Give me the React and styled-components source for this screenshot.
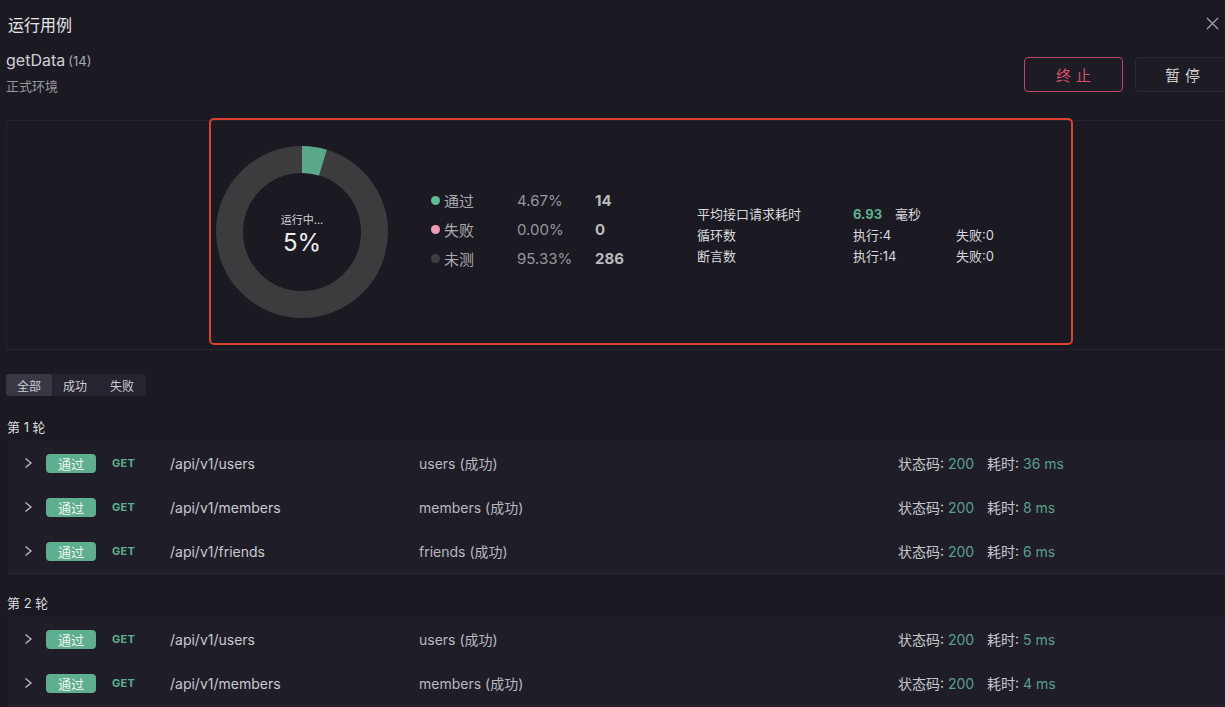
import React from "react";
import styled, { createGlobalStyle } from "styled-components";

const GlobalStyle = createGlobalStyle`
  html, body { margin: 0; padding: 0; background: #1b1a22; }
  body {
    font-family: Inter, "Noto Sans CJK SC", "Noto Sans", sans-serif;
    color: #d6d6da;
  }
  * { box-sizing: border-box; }
`;

const Modal = styled.div`
  width: 1225px;
  height: 707px;
  display: flex;
  flex-direction: column;
  overflow: hidden;
  background: #1b1a22;
`;

const Header = styled.div`
  height: 53px;
  flex: none;
  display: flex;
  align-items: center;
  justify-content: space-between;
  padding: 0 8px 6px 8px;
  background: #1b1a22;
`;

const HeaderTitle = styled.div`
  font-size: 16px;
  color: #e4e4e8;
  font-weight: 400;
`;

const Close = styled.button`
  width: 16px;
  height: 16px;
  padding: 0;
  background: none;
  border: none;
  display: flex;
  align-items: center;
  justify-content: center;
  margin-right: -3px;
`;

const Body = styled.div`
  flex: 1;
  overflow: hidden;
  padding-left: 6px;
`;

const TopRow = styled.div`
  display: flex;
  justify-content: space-between;
  align-items: flex-start;
  margin-top: -3px;
`;

const TitleBlock = styled.div`
  display: flex;
  flex-direction: column;
`;

const Title = styled.div`
  font-size: 16px;
  line-height: 20px;
  color: #d0d0d4;
  span {
    font-size: 13px;
    color: #a8a8ae;
    margin-left: 3px;
  }
`;

const SubTitle = styled.div`
  margin-top: 5px;
  font-size: 13px;
  line-height: 20px;
  color: #97979d;
`;

const Buttons = styled.div`
  display: flex;
  gap: 12px;
  margin-top: 7px;
  margin-right: -10px;
`;

const Btn = styled.button`
  height: 35px;
  width: ${(p) => (p.$danger ? "99px" : "100px")};
  border-radius: 4px;
  background: ${(p) => (p.$danger ? "#1d1b24" : "#1d1c24")};
  border: 1px solid ${(p) => (p.$danger ? "#b44a6a" : "#2a2931")};
  color: ${(p) => (p.$danger ? "#d8506f" : "#cfcfd3")};
  font-family: "Noto Sans CJK SC", sans-serif;
  font-size: 15px;
  letter-spacing: 5px;
  text-align: ${(p) => (p.$danger ? "center" : "left")};
  padding: 0 0 0 ${(p) => (p.$danger ? "5px" : "29px")};
`;

const StatsPanel = styled.div`
  margin-top: 24px;
  margin-right: -20px;
  height: 230px;
  border: 1px solid #26252e;
  border-radius: 2px;
  padding-left: 202px;
  display: flex;
  align-items: flex-start;
`;

const Highlight = styled.div`
  margin-top: -3px;
  width: 864px;
  height: 227px;
  border: 2px solid #d9432f;
  border-radius: 5px;
  display: flex;
  align-items: center;
  padding-left: 3px;
`;

const DonutWrap = styled.div`
  position: relative;
  width: 176px;
  height: 176px;
  flex: none;
`;

const DonutCenter = styled.div`
  position: absolute;
  inset: 0;
  display: flex;
  flex-direction: column;
  align-items: center;
  justify-content: center;
  padding-top: 6px;
`;

const Running = styled.div`
  font-size: 11px;
  line-height: 14px;
  color: #d6d6da;
`;

const Percent = styled.div`
  font-size: 24px;
  line-height: 28px;
  color: #ececef;
  margin-top: 2px;
`;

const Legend = styled.div`
  margin-left: 41px;
  margin-top: -4px;
  display: grid;
  grid-template-columns: 86px 78px 102px;
  grid-auto-rows: 29px;
  align-items: center;
`;

const LegendLabel = styled.div`
  display: flex;
  align-items: center;
  gap: 4px;
  font-size: 15px;
  color: #a9a9ae;
`;

const Dot = styled.span`
  width: 9px;
  height: 9px;
  border-radius: 50%;
  background: ${(p) => p.$color};
`;

const LegendPct = styled.div`
  font-size: 15px;
  color: #96969c;
`;

const LegendCount = styled.div`
  font-size: 15px;
  font-weight: 700;
  color: #b9b9be;
`;

const Metrics = styled.div`
  margin-top: 6px;
  display: grid;
  grid-template-columns: 156px 103px 80px;
  grid-auto-rows: 21px;
  align-items: center;
  font-size: 13px;
  color: #d9d9dd;
`;

const MetricValue = styled.div`
  display: flex;
  align-items: center;
  gap: 13px;
  b {
    color: #5fae8f;
    font-weight: 700;
    font-size: 13px;
  }
`;

const Tabs = styled.div`
  margin-top: 24px;
  display: inline-flex;
  background: #26252f;
  border-radius: 3px;
  height: 22px;
`;

const Tab = styled.div`
  width: ${(p) => p.$w}px;
  display: flex;
  align-items: center;
  justify-content: center;
  font-size: 12px;
  color: #cfcfd4;
  background: ${(p) => (p.$active ? "#383743" : "transparent")};
  border-radius: 3px;
`;

const RoundLabel = styled.div`
  margin-top: ${(p) => p.$mt}px;
  height: 20px;
  line-height: 20px;
  font-size: 13px;
  color: #d9d9dd;
  padding-left: 1px;
`;

const Group = styled.div`
  margin-left: 2px;
  margin-top: 4px;
  background: #1f1e28;
  border-bottom: 1px solid #2b2a34;
`;

const Row = styled.div`
  height: 44px;
  display: grid;
  grid-template-columns: 22px 66px 58px 249px 479px 89px auto;
  align-items: center;
  padding-left: 16px;
`;

const Badge = styled.span`
  width: 50px;
  height: 19px;
  border-radius: 4px;
  background: #5fae8f;
  color: #eef7f2;
  font-size: 13px;
  display: flex;
  align-items: center;
  justify-content: center;
`;

const Method = styled.span`
  font-size: 11px;
  font-weight: 700;
  color: #5fae8f;
  letter-spacing: 0.3px;
`;

const Path = styled.span`
  font-size: 14px;
  color: #c9c9ce;
`;

const Name = styled.span`
  font-size: 14px;
  color: #b9b9be;
`;

const Meta = styled.span`
  font-size: 14px;
  color: #c6c6cb;
  em {
    font-style: normal;
    color: #5a9f88;
  }
`;

const Chevron = () => (
  <svg width="9" height="12" viewBox="0 0 9 12">
    <path d="M1.5 1.5 L7 6 L1.5 10.5" fill="none" stroke="#bdbdc2" strokeWidth="1.3" />
  </svg>
);

const Donut = ({ pct }) => {
  const r = 72.5;
  const c = 2 * Math.PI * r;
  return (
    <svg width="176" height="176" viewBox="0 0 176 176">
      <circle cx="88" cy="88" r={r} fill="none" stroke="#3c3c3f" strokeWidth="27" />
      <circle
        cx="88"
        cy="88"
        r={r}
        fill="none"
        stroke="#5aa88a"
        strokeWidth="27"
        strokeDasharray={`${c * pct} ${c}`}
        transform="rotate(-90 88 88)"
      />
    </svg>
  );
};

const rounds = [
  {
    label: "第 1 轮",
    mt: 21,
    rows: [
      ["/api/v1/users", "users (成功)", "36 ms"],
      ["/api/v1/members", "members (成功)", "8 ms"],
      ["/api/v1/friends", "friends (成功)", "6 ms"],
    ],
  },
  {
    label: "第 2 轮",
    mt: 19,
    rows: [
      ["/api/v1/users", "users (成功)", "5 ms"],
      ["/api/v1/members", "members (成功)", "4 ms"],
    ],
  },
];

export default function App() {
  return (
    <>
      <GlobalStyle />
      <Modal>
        <Header>
          <HeaderTitle>运行用例</HeaderTitle>
          <Close aria-label="close">
            <svg width="13" height="13" viewBox="0 0 13 13">
              <path d="M1 1 L12 12 M12 1 L1 12" stroke="#a0a0a6" strokeWidth="1.3" />
            </svg>
          </Close>
        </Header>
        <Body>
          <TopRow>
            <TitleBlock>
              <Title>
                getData<span>(14)</span>
              </Title>
              <SubTitle>正式环境</SubTitle>
            </TitleBlock>
            <Buttons>
              <Btn $danger>终止</Btn>
              <Btn>暂停</Btn>
            </Buttons>
          </TopRow>

          <StatsPanel>
            <Highlight>
              <DonutWrap>
                <Donut pct={0.0467} />
                <DonutCenter>
                  <Running>运行中...</Running>
                  <Percent>5%</Percent>
                </DonutCenter>
              </DonutWrap>
              <Legend>
                <LegendLabel>
                  <Dot $color="#5fb896" />
                  通过
                </LegendLabel>
                <LegendPct>4.67%</LegendPct>
                <LegendCount>14</LegendCount>
                <LegendLabel>
                  <Dot $color="#f29bb5" />
                  失败
                </LegendLabel>
                <LegendPct>0.00%</LegendPct>
                <LegendCount>0</LegendCount>
                <LegendLabel>
                  <Dot $color="#3d3d40" />
                  未测
                </LegendLabel>
                <LegendPct>95.33%</LegendPct>
                <LegendCount>286</LegendCount>
              </Legend>
              <Metrics>
                <div>平均接口请求耗时</div>
                <MetricValue>
                  <b>6.93</b>
                  <span>毫秒</span>
                </MetricValue>
                <div />
                <div>循环数</div>
                <div>执行:4</div>
                <div>失败:0</div>
                <div>断言数</div>
                <div>执行:14</div>
                <div>失败:0</div>
              </Metrics>
            </Highlight>
          </StatsPanel>

          <Tabs>
            <Tab $w={46} $active>全部</Tab>
            <Tab $w={46}>成功</Tab>
            <Tab $w={48}>失败</Tab>
          </Tabs>

          {rounds.map((round) => (
            <React.Fragment key={round.label}>
              <RoundLabel $mt={round.mt}>{round.label}</RoundLabel>
              <Group>
                {round.rows.map(([path, name, time]) => (
                  <Row key={path}>
                    <Chevron />
                    <Badge>通过</Badge>
                    <Method>GET</Method>
                    <Path>{path}</Path>
                    <Name>{name}</Name>
                    <Meta>
                      状态码: <em>200</em>
                    </Meta>
                    <Meta>
                      耗时: <em>{time}</em>
                    </Meta>
                  </Row>
                ))}
              </Group>
            </React.Fragment>
          ))}
        </Body>
      </Modal>
    </>
  );
}
